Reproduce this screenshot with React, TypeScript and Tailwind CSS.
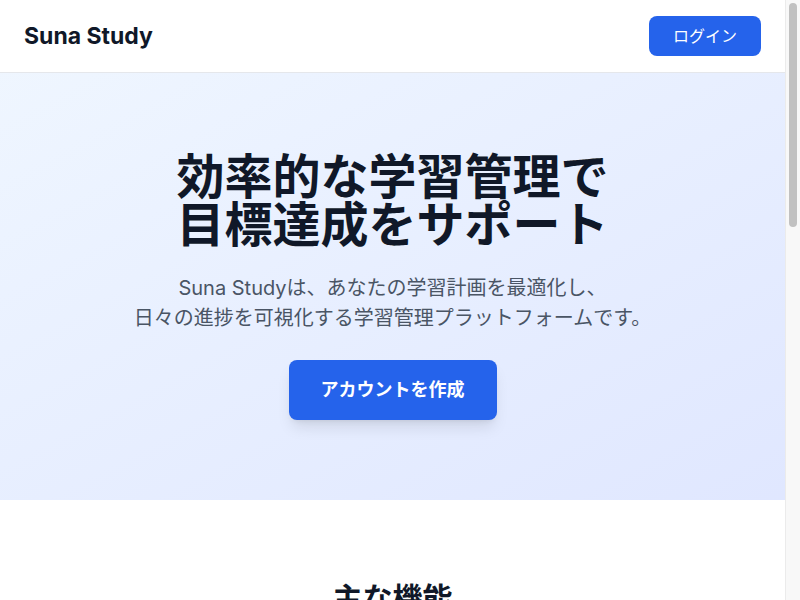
import React from "react";

const font = { fontFamily: 'Inter, "Noto Sans CJK JP", "Noto Sans", sans-serif' };

const features = [
  { title: "学習計画の作成", desc: "目標に合わせた学習計画を簡単に作成し、毎日のタスクを管理できます。" },
  { title: "進捗の可視化", desc: "グラフやチャートで学習の進捗をひと目で確認できます。" },
  { title: "リマインダー", desc: "学習時間を通知して、継続的な学習習慣をサポートします。" },
];

export default function App() {
  return (
    <div className="flex h-screen bg-white text-gray-900" style={font}>
      <div className="min-w-0 flex-1 overflow-y-auto [scrollbar-width:none]">
        <header className="bg-white border-b border-gray-200 shadow-sm">
          <div className="flex items-center justify-between px-6 py-4">
            <div className="text-[23px] font-bold text-gray-900">Suna Study</div>
            <button className="rounded-lg bg-[#2563eb] px-6 py-2 text-base text-white">ログイン</button>
          </div>
        </header>

        <section className="bg-gradient-to-br from-blue-50 to-indigo-100 py-20 text-center">
          <h1 className="text-5xl font-bold leading-none text-gray-900">
            効率的な学習管理で
            <br />
            目標達成をサポート
          </h1>
          <p className="mt-6 text-xl leading-normal text-gray-600">
            Suna Studyは、あなたの学習計画を最適化し、
            <br />
            日々の進捗を可視化する学習管理プラットフォームです。
          </p>
          <button className="mt-[27px] rounded-lg bg-[#2563eb] px-8 py-4 text-lg font-semibold text-white shadow-lg">
            アカウントを作成
          </button>
        </section>

        <section className="bg-white py-20">
          <h2 className="text-center text-3xl font-bold text-gray-900">主な機能</h2>
          <div className="mx-auto mt-12 grid max-w-5xl grid-cols-3 gap-8 px-6">
            {features.map((f) => (
              <div key={f.title} className="rounded-xl bg-gray-50 p-6 shadow-sm">
                <div className="mb-4 h-12 w-12 rounded-lg bg-blue-100" />
                <h3 className="mb-2 text-xl font-semibold">{f.title}</h3>
                <p className="text-gray-600">{f.desc}</p>
              </div>
            ))}
          </div>
        </section>

        <section className="bg-gray-50 py-20 text-center">
          <h2 className="text-3xl font-bold">今すぐ始めましょう</h2>
          <p className="mt-4 text-lg text-gray-600">無料でアカウントを作成して、学習を始めましょう。</p>
          <button className="mt-8 rounded-lg bg-[#2563eb] px-8 py-4 text-lg font-semibold text-white">
            無料で始める
          </button>
        </section>

        <footer className="bg-gray-900 py-12 text-center text-gray-400">
          <p>© 2024 Suna Study. All rights reserved.</p>
        </footer>
      </div>

      <div className="w-[15px] shrink-0 border-l border-[#ebebeb] bg-[#f8f8f8] px-[3px] pt-[3px]">
        <div className="h-[224px] rounded-full bg-[#c1c1c1]" />
      </div>
    </div>
  );
}
